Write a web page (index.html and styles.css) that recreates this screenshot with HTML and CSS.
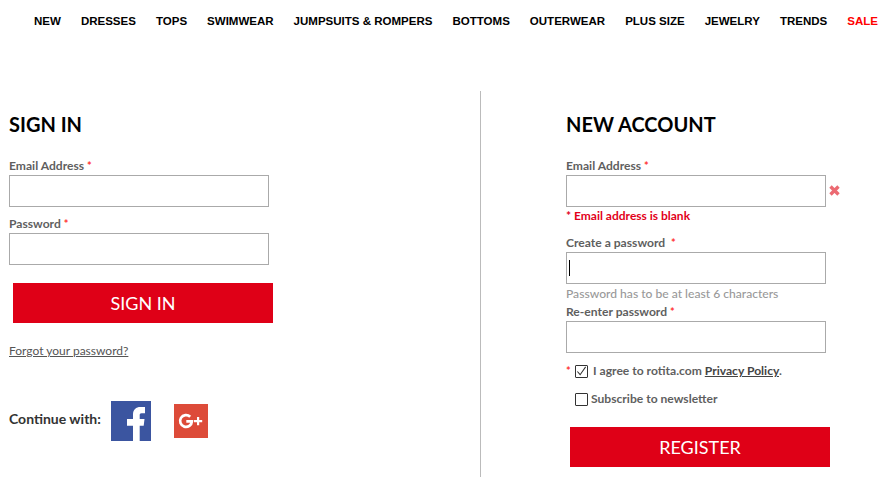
FILE: index.html
```html
<!DOCTYPE html>
<html lang="en">
<head>
<meta charset="utf-8">
<title>Sign in</title>
<link rel="stylesheet" href="styles.css">
</head>
<body>
<nav class="nav">
  <a>NEW</a><a>DRESSES</a><a>TOPS</a><a>SWIMWEAR</a><a>JUMPSUITS &amp; ROMPERS</a><a>BOTTOMS</a><a>OUTERWEAR</a><a>PLUS SIZE</a><a>JEWELRY</a><a>TRENDS</a><a class="sale">SALE</a>
</nav>
<main class="main">
  <section class="signin">
    <h2>SIGN IN</h2>
    <label class="lbl">Email Address <span class="req">*</span></label>
    <div class="input"></div>
    <label class="lbl lbl-next">Password <span class="req">*</span></label>
    <div class="input"></div>
    <button class="btn btn-signin">SIGN IN</button>
    <a class="forgot">Forgot your password?</a>
    <div class="social">
      <span class="continue">Continue with:</span>
      <svg class="fb" width="40" height="40" viewBox="0 0 40 40"><rect width="40" height="40" fill="#3b55a0"/><path d="M22 40V24.700H16V18H22V13.500C22 8.500 25 6 29.500 6H34V12.300H30.500C29 12.300 28.700 13 28.700 14.500V18H33.500L32.700 24.700H28.700V40Z" fill="#fff"/></svg>
      <svg class="gp" width="34" height="34" viewBox="0 0 34 34"><rect width="34" height="34" fill="#dd4b39"/><path d="M16.200 12.800A5.900 5.900 0 1 0 17.900 17.300H12.300" fill="none" stroke="#fff" stroke-width="2.700"/><path d="M23 13v3h-3v2.200h3v3h2.200v-3h3V16h-3v-3z" fill="#fff"/></svg>
    </div>
  </section>
  <section class="register">
    <h2>NEW ACCOUNT</h2>
    <label class="lbl">Email Address <span class="req">*</span></label>
    <div class="input-row">
      <div class="input"></div>
      <svg class="err-x" width="11" height="11" viewBox="0 0 11 11"><path d="M1.500 1.500l8 8M9.500 1.500l-8 8" stroke="#ec6a72" stroke-width="3.400"/></svg>
    </div>
    <p class="err">* Email address is blank</p>
    <label class="lbl lbl-create">Create a password &nbsp;<span class="req">*</span></label>
    <div class="input input-focus"><span class="caret"></span></div>
    <p class="hint">Password has to be at least 6 characters</p>
    <label class="lbl lbl-re">Re-enter password <span class="req">*</span></label>
    <div class="input"></div>
    <div class="check check-agree">
      <span class="req req-check">*</span>
      <span class="box"><svg width="12" height="12" viewBox="0 0 12 12"><path d="M1.500 6.500l3 3.500 6-8.500" fill="none" stroke="#333" stroke-width="1.100"/></svg></span>
      <span class="agree">I agree to rotita.com <u>Privacy Policy</u>.</span>
    </div>
    <div class="check check-sub">
      <span class="box"></span>
      <span>Subscribe to newsletter</span>
    </div>
    <button class="btn btn-register">REGISTER</button>
  </section>
</main>
</body>
</html>
```
FILE: styles.css
```css
* { box-sizing: border-box; }
html, body { margin: 0; height: 477px; overflow: hidden; background: #fff; }
body { font-family: Lato, "Liberation Sans", sans-serif; color: #555; }
.nav {
  display: flex;
  gap: 20px;
  height: 91px;
  padding: 14px 0 0 34px;
  font: bold 11.53px/15px "Liberation Sans", Arial, sans-serif;
  color: #000;
  white-space: nowrap;
}
.sale { color: #f00; }
.main { display: flex; height: 386px; }
.signin { width: 481px; padding: 0 0 0 9px; border-right: 1px solid #bbb; }
.register { flex: 1; padding-left: 85px; }
h2 {
  margin: 20px 0 20px;
  font-size: 20px;
  line-height: 27px;
  font-weight: 700;
  color: #000;
}
.lbl { display: block; font-size: 12.1px; line-height: 16px; font-weight: 700; color: #5f5f5f; }
.lbl-next { margin-top: 9px; }
.req { color: #f33; font-size: 11px; }
.input { width: 260px; height: 32px; border: 1px solid #aaa; background: #fff; margin-top: 1px; }
.input-row { display: flex; align-items: center; gap: 3px; }
.err { margin: 1px 0 0; font-size: 12px; line-height: 16px; font-weight: 700; color: #e2001a; }
.lbl-create { margin-top: 11px; }
.input-focus { display: flex; align-items: center; padding-left: 2px; }
.caret { width: 1px; height: 16px; background: #000; }
.hint { margin: 2px 0 0; font-size: 12.1px; line-height: 16px; color: #999; font-weight: 500; }
.lbl-re { margin-top: 2px; }
.btn {
  display: block;
  width: 260px;
  height: 40px;
  border: 0;
  padding: 0;
  background: #df0017;
  color: #fff;
  font-family: Lato, "Liberation Sans", sans-serif;
  font-size: 18px;
  font-weight: 400;
}
.btn-signin { margin: 18px 0 0 4px; }
.forgot {
  display: block;
  margin-top: 20px;
  font-size: 12px;
  line-height: 16px;
  color: #555;
  text-decoration: underline;
}
.social { display: flex; align-items: center; margin-top: 42px; }
.continue { font-size: 14px; font-weight: 700; color: #333; margin: 0 10px 6px 0; }
.gp { margin-left: 23px; }
.check { display: flex; align-items: center; font-size: 12.1px; font-weight: 700; color: #5f5f5f; line-height: 16px; }
.check-agree { margin-top: 10px; }
.req-check { width: 9px; }
.box {
  display: flex;
  align-items: center;
  justify-content: center;
  width: 13px;
  height: 13px;
  border: 1px solid #333;
  border-radius: 1px;
}
.check-sub { margin-top: 12px; padding-left: 9px; gap: 3px; }
.agree { margin-left: 5px; }
.agree u { color: #444; }
.btn-register { margin: 20px 0 0 4px; }
```
